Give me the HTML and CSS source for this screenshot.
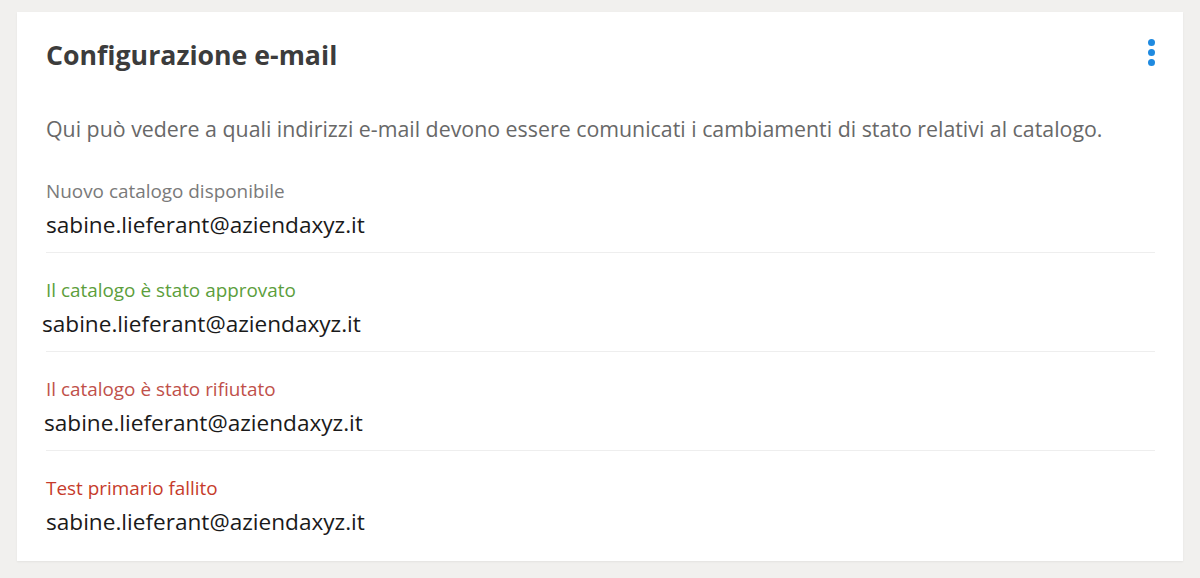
FILE: index.html
```html
<!DOCTYPE html>
<html lang="it">
<head>
<meta charset="utf-8">
<title>Configurazione e-mail</title>
<link rel="stylesheet" href="styles.css">
</head>
<body>
<section class="card">
  <header class="card-head">
    <h1 class="title">Configurazione e-mail</h1>
    <button class="menu" aria-label="Menu">
      <span class="dot"></span><span class="dot"></span><span class="dot"></span>
    </button>
  </header>
  <p class="desc">Qui può vedere a quali indirizzi e-mail devono essere comunicati i cambiamenti di stato relativi al catalogo.</p>
  <div class="list">
    <div class="item">
      <div class="label">Nuovo catalogo disponibile</div>
      <div class="email">sabine.lieferant@aziendaxyz.it</div>
    </div>
    <div class="item">
      <div class="label green">Il catalogo è stato approvato</div>
      <div class="email shift-4">sabine.lieferant@aziendaxyz.it</div>
    </div>
    <div class="item">
      <div class="label red">Il catalogo è stato rifiutato</div>
      <div class="email shift-2">sabine.lieferant@aziendaxyz.it</div>
    </div>
    <div class="item">
      <div class="label red2">Test primario fallito</div>
      <div class="email">sabine.lieferant@aziendaxyz.it</div>
    </div>
  </div>
</section>
</body>
</html>
```

FILE: styles.css
```css
html, body {
  margin: 0;
  padding: 0;
}
body {
  background: #f1f0ee;
  font-family: "Open Sans", "Liberation Sans", sans-serif;
  padding: 12px 17px 17px;
}
.card {
  background: #ffffff;
  height: 549px;
  box-sizing: border-box;
  padding: 25px 28px 0 29px;
  box-shadow: 0 1px 2px rgba(0,0,0,0.06);
}
.card-head {
  display: flex;
  justify-content: space-between;
  align-items: flex-start;
}
.title {
  margin: 0;
  font-size: 26.7px;
  font-weight: 700;
  color: #3c3c3c;
  line-height: 36px;
}
.menu {
  border: 0;
  background: none;
  padding: 0;
  margin: 2px 0 0 0;
  display: flex;
  flex-direction: column;
  gap: 3px;
  width: 7px;
  align-items: center;
}
.dot {
  width: 7px;
  height: 7px;
  border-radius: 50%;
  background: #1f8ae0;
}
.desc {
  margin: 42px 0 0 0;
  font-size: 21.35px;
  line-height: 28px;
  color: #686868;
}
.list {
  margin-top: 36px;
}
.item {
  border-bottom: 1px solid #eeeeee;
  padding: 25px 0 12px;
}
.item:first-child {
  padding-top: 0;
}
.item:last-child {
  border-bottom: 0;
}
.label {
  font-size: 18.9px;
  line-height: 24px;
  color: #7a7a7a;
}
.label.green { color: #5c9e3c; }
.label.red { color: #c0504a; }
.label.red2 { color: #c63b2b; }
.email {
  margin-top: 7px;
  font-size: 22.6px;
  line-height: 30px;
  color: #1a1a1a;
}
.shift-4 { margin-left: -4px; }
.shift-2 { margin-left: -2px; }
```
